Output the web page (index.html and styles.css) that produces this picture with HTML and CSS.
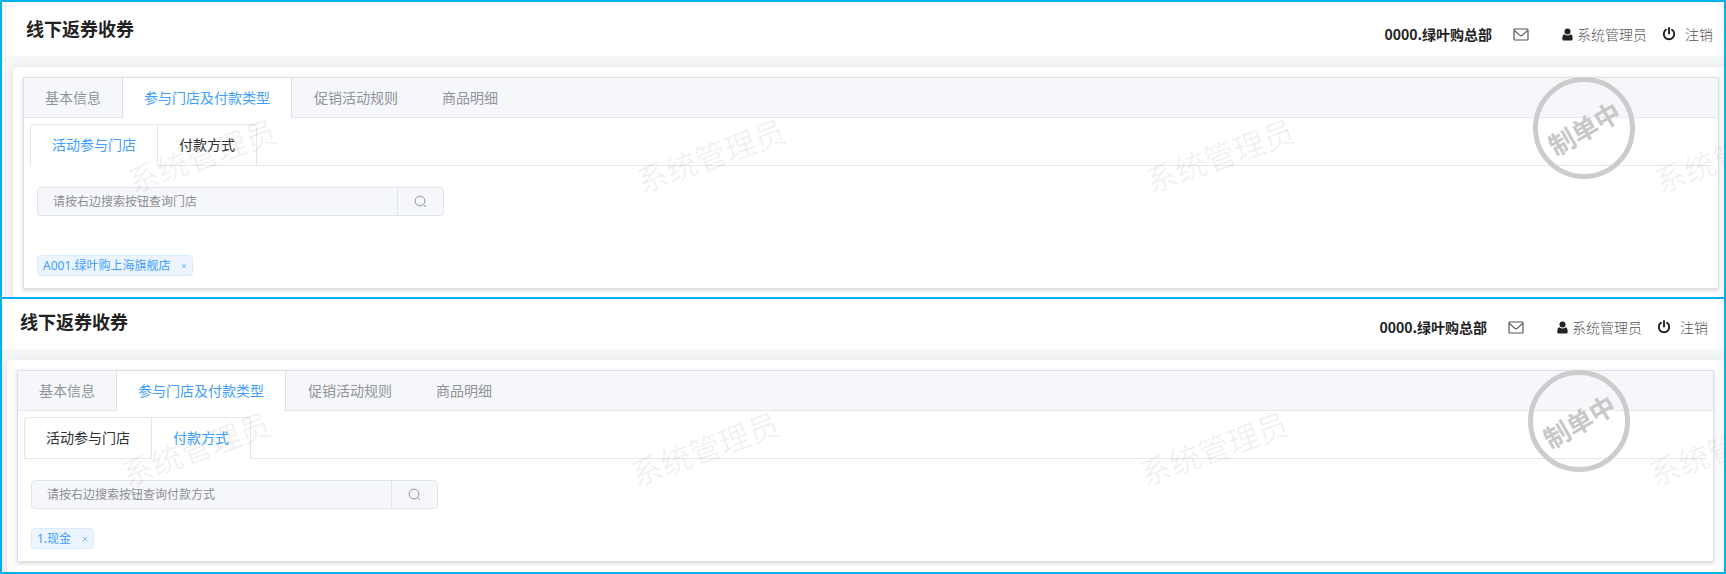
FILE: index.html
```html
<!DOCTYPE html>
<html lang="zh-CN">
<head>
<meta charset="utf-8">
<title>线下返券收券</title>
<link rel="stylesheet" href="styles.css">
</head>
<body>
<svg class="defs" aria-hidden="true">
  <symbol id="i-mail" viewBox="0 0 16 13"><rect x="1" y="1" width="14" height="11" rx="1" fill="none" stroke="#555" stroke-width="1.2"/><path d="M1.500 2.500 6.800 7.300q1.200.9 2.400 0L14.500 2.500" fill="none" stroke="#555" stroke-width="1.100"/></symbol>
  <symbol id="i-user" viewBox="0 0 11 13"><circle cx="5.500" cy="3.500" r="3"/><path d="M2.500 6.200C.8 6.700.3 8.500.3 10.700c0 1.200.7 1.900 1.800 1.900h6.800c1.100 0 1.800-.7 1.800-1.900 0-2.200-.5-4-2.200-4.500-.8.8-1.800 1.200-3 1.200s-2.200-.4-3-1.200z"/></symbol>
  <symbol id="i-power" viewBox="0 0 14 14"><path d="M4 2.800a5.200 5.200 0 1 0 6 0" fill="none" stroke="#222" stroke-width="1.900" stroke-linecap="round"/><path d="M7 1v5.500" stroke="#222" stroke-width="1.900" stroke-linecap="round"/></symbol>
  <symbol id="i-search" viewBox="0 0 13 13"><circle cx="6" cy="6" r="4.900" fill="none" stroke="#909399"/><path d="M9.600 9.600 12 12" stroke="#909399"/></symbol>
  <symbol id="i-close" viewBox="0 0 6 6"><path d="M.8.8l4.400 4.400M5.200.8.8 5.200" stroke="#6bb2ff" stroke-width=".9"/></symbol>
</svg>
<main class="board">
  <section class="screen screen-stores">
    <div class="rail"></div>
    <div class="page">
      <header class="topbar">
        <h1 class="title">线下返券收券</h1>
        <div class="account">
          <strong class="org">0000.绿叶购总部</strong>
          <a class="mail" href="#" aria-label="消息"><svg width="16" height="13"><use href="#i-mail"/></svg></a>
          <a class="user" href="#"><svg width="11" height="13"><use href="#i-user"/></svg>系统管理员</a>
          <a class="logout" href="#"><svg width="14" height="14"><use href="#i-power"/></svg>注销</a>
        </div>
      </header>
      <div class="card">
        <div class="tabs">
          <nav class="tabs-nav" role="tablist">
            <button class="tab" role="tab">基本信息</button>
            <button class="tab active" role="tab" aria-selected="true">参与门店及付款类型</button>
            <button class="tab" role="tab">促销活动规则</button>
            <button class="tab" role="tab">商品明细</button>
          </nav>
          <div class="tabs-body">
            <nav class="subtabs" role="tablist">
              <button class="subtab active" role="tab" aria-selected="true">活动参与门店</button>
              <button class="subtab" role="tab">付款方式</button>
            </nav>
            <div class="pane">
              <div class="search">
                <input class="search-input" type="text" readonly aria-label="门店" placeholder="请按右边搜索按钮查询门店">
                <button class="search-button" aria-label="搜索"><svg width="13" height="13"><use href="#i-search"/></svg></button>
              </div>
              <div class="tags"><span class="tag">A001.绿叶购上海旗舰店<button class="tag-close" aria-label="移除"><svg width="6" height="6"><use href="#i-close"/></svg></button></span></div>
            </div>
          </div>
        </div>
        <div class="stamp"><span class="stamp-text">制单中</span></div>
      </div>
      <div class="watermark" aria-hidden="true"><span>系统管理员</span><span>系统管理员</span><span>系统管理员</span><span>系统管理员</span></div>
    </div>
  </section>
  <section class="screen screen-payment">
    <div class="page">
      <header class="topbar">
        <h1 class="title">线下返券收券</h1>
        <div class="account">
          <strong class="org">0000.绿叶购总部</strong>
          <a class="mail" href="#" aria-label="消息"><svg width="16" height="13"><use href="#i-mail"/></svg></a>
          <a class="user" href="#"><svg width="11" height="13"><use href="#i-user"/></svg>系统管理员</a>
          <a class="logout" href="#"><svg width="14" height="14"><use href="#i-power"/></svg>注销</a>
        </div>
      </header>
      <div class="card">
        <div class="tabs">
          <nav class="tabs-nav" role="tablist">
            <button class="tab" role="tab">基本信息</button>
            <button class="tab active" role="tab" aria-selected="true">参与门店及付款类型</button>
            <button class="tab" role="tab">促销活动规则</button>
            <button class="tab" role="tab">商品明细</button>
          </nav>
          <div class="tabs-body">
            <nav class="subtabs" role="tablist">
              <button class="subtab" role="tab">活动参与门店</button>
              <button class="subtab active" role="tab" aria-selected="true">付款方式</button>
            </nav>
            <div class="pane">
              <div class="search">
                <input class="search-input" type="text" readonly aria-label="付款方式" placeholder="请按右边搜索按钮查询付款方式">
                <button class="search-button" aria-label="搜索"><svg width="13" height="13"><use href="#i-search"/></svg></button>
              </div>
              <div class="tags"><span class="tag">1.现金<button class="tag-close" aria-label="移除"><svg width="6" height="6"><use href="#i-close"/></svg></button></span></div>
            </div>
          </div>
        </div>
        <div class="stamp"><span class="stamp-text">制单中</span></div>
      </div>
      <div class="watermark" aria-hidden="true"><span>系统管理员</span><span>系统管理员</span><span>系统管理员</span><span>系统管理员</span></div>
    </div>
  </section>
</main>
</body>
</html>
```

FILE: styles.css
```css
* { box-sizing: border-box; }

body {
  margin: 0;
  background: #fff;
  color: #303133;
  font-family: "Noto Sans CJK SC", sans-serif;
  font-size: 14px;
}

button, input { font: inherit; color: inherit; margin: 0; padding: 0; border: 0; background: none; }
button { cursor: pointer; white-space: nowrap; }
a { color: inherit; text-decoration: none; }
svg { display: block; }
.defs { position: absolute; width: 0; height: 0; }

.board { border: 2px solid #00b0f0; }
.screen { display: flex; overflow: hidden; }
.screen-stores { border-bottom: 2px solid #00b0f0; }

.rail { width: 4px; border-right: 1px solid #e8eaee; }
.rail::before { content: ""; display: block; height: 57px; border-bottom: 1px solid #e8eaee; }

.page { position: relative; flex: 1; min-width: 0; background: #f6f7f9; }

.topbar {
  display: flex;
  justify-content: space-between;
  height: 50px;
  padding: 0 16px 0 18px;
  background: #fff;
}
.screen-stores .topbar { height: 54px; padding: 4px 11px 0 20px; }

.title { margin: 0; font-size: 18px; font-weight: 700; line-height: 44px; color: #222; }
.account { display: flex; align-items: center; height: 56px; color: #555; font-weight: 300; }
.org { font-weight: 700; color: #222; }
.mail { margin-left: 21px; }
.user { display: flex; align-items: center; gap: 4px; margin-left: 33px; }
.user svg { fill: #222; }
.logout { display: flex; align-items: center; gap: 9px; margin-left: 15px; }

.card {
  position: relative;
  margin: 11px 0 0 5px;
  padding: 10px;
  border-radius: 4px 4px 0 0;
  background: #fff;
  box-shadow: 0 2px 12px rgba(0, 0, 0, .1);
}
.screen-stores .card { margin: 11px -5px 0 7px; padding-bottom: 8px; }

.tabs {
  border: 1px solid #dcdfe6;
  box-shadow: 0 2px 4px rgba(0, 0, 0, .12), 0 0 6px rgba(0, 0, 0, .04);
}
.tabs-nav { display: flex; height: 40px; background: #f5f7fa; border-bottom: 1px solid #e4e7ed; }
.tab { height: 40px; padding: 0 21px 2px; border: solid transparent; border-width: 0 1px; color: #909399; }
.tab:first-child { border: 0; }
.tab.active { background: #fff; border-color: #dcdfe6; color: #409eff; }

.tabs-body { padding: 6px 6px 12px; }
.subtabs { display: flex; height: 42px; border-bottom: 1px solid #e4e7ed; }
.subtab { height: 42px; padding: 0 21px 2px; border: solid #e4e7ed; border-width: 1px 0 1px 1px; }
.subtab:first-child { border-top-left-radius: 4px; }
.subtab:last-child { border-right-width: 1px; border-top-right-radius: 4px; }
.subtab.active { border-bottom-color: #fff; color: #409eff; }

.pane { padding: 21px 7px 0; }
.search { display: flex; width: 407px; max-width: 100%; height: 29px; border: 1px solid #e0e3ea; border-radius: 4px; background: #f5f7fa; }
.search-input { flex: 1; min-width: 0; padding: 0 15px 2px; font-size: 12px; }
.search-input::placeholder { color: #8c8e93; opacity: 1; }
.search-button { display: flex; align-items: center; justify-content: center; width: 46px; border-left: 1px solid #e0e3ea; }

.tags { display: flex; margin-top: 19px; }
.screen-stores .tags { margin-top: 39px; }
.tag {
  display: flex;
  align-items: center;
  gap: 11px;
  height: 21px;
  padding: 0 5px;
  border: 1px solid #d9ecff;
  border-radius: 4px;
  background: #ecf5ff;
  color: #409eff;
  font-family: "Noto Sans", "Noto Sans CJK SC", sans-serif;
  font-size: 12px;
  line-height: 18px;
}

.stamp {
  position: absolute;
  top: 10px;
  right: 94px;
  display: flex;
  align-items: center;
  justify-content: center;
  width: 102px;
  height: 102px;
  border: 5px solid #ccc;
  border-radius: 50%;
}
.stamp-text { color: #c8c8c8; font-size: 26px; font-weight: 700; line-height: 36px; transform: rotate(-30deg); }

.watermark {
  position: absolute;
  inset: 0;
  display: flex;
  gap: 354px;
  padding: 126px 0 0 116px;
  overflow: hidden;
  pointer-events: none;
  font-size: 31px;
  line-height: 46px;
  color: rgba(0, 0, 0, .06);
}
.screen-stores .watermark { padding: 130px 0 0 118px; }
.watermark span { flex: none; width: 155px; height: 46px; transform: rotate(-20deg); }
```
